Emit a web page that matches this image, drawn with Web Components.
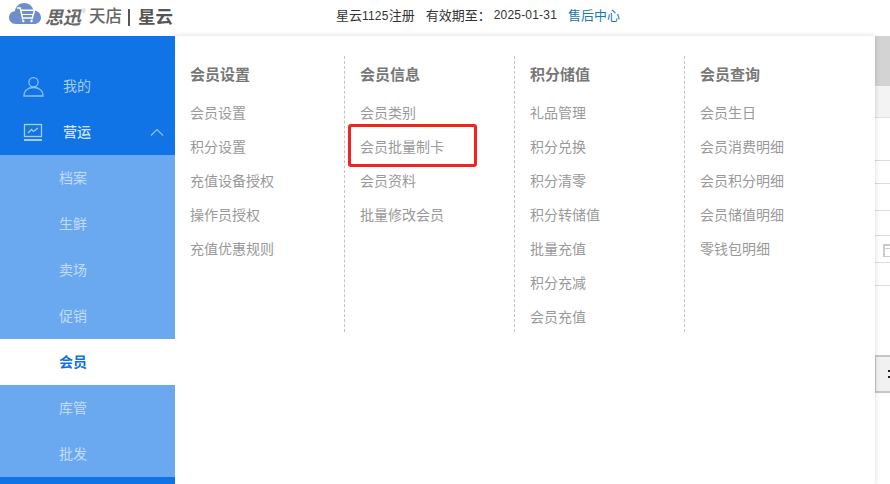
<!DOCTYPE html>
<html lang="zh"><head><meta charset="utf-8"><style>
html,body{margin:0;padding:0;background:#fff}
body{width:890px;height:484px;overflow:hidden;font-family:"Noto Sans CJK SC","Liberation Sans",sans-serif}
</style></head><body>
<app-shell>
  <top-bar slot="top"></top-bar>
  <side-nav slot="side"></side-nav>
  <mega-menu slot="menu"></mega-menu>
  <back-strip slot="back"></back-strip>
</app-shell>
<script>
const cjk='"Noto Sans CJK SC","Liberation Sans",sans-serif';
function def(name,html,init){
  customElements.define(name,class extends HTMLElement{
    connectedCallback(){ if(this.shadowRoot)return; const r=this.attachShadow({mode:'open'}); r.innerHTML=html; if(init)init(r,this);}
  });
}
def('app-shell',`<style>
:host{display:grid;grid-template-columns:175px 700px 15px;grid-template-rows:36px 448px;width:890px;height:484px;overflow:hidden}
.t{grid-column:1/4}
.s{position:relative;z-index:2}
.m{box-shadow:0 0 5px rgba(0,0,0,.16);position:relative;z-index:1;background:#fff}
</style><div class="t"><slot name="top"></slot></div><div class="s"><slot name="side"></slot></div><div class="m"><slot name="menu"></slot></div><div><slot name="back"></slot></div>`);

def('top-bar',`<style>
:host{display:flex;height:36px;background:#fff;align-items:center;position:relative;font:13px ${cjk};color:#333}
.logo{display:flex;align-items:flex-start;width:336px;padding:3px 0 0 9px;box-sizing:border-box;height:36px;color:#555}
svg{display:block;flex:none}
.sx{font:italic 700 18px/1 ${cjk};margin:4px 0 0 4px;color:#666;letter-spacing:-.2px}
.r{font:6px/1 "Liberation Sans",sans-serif;color:#aaa;margin:5px 3px 0 1px}
.td{font:500 16.5px/1 ${cjk};color:#666;margin-top:4px}
.bar{width:2px;height:17px;background:#555;margin:6px 8px 0 6px}
.xy{font:700 17.5px/1 ${cjk};color:#555;margin-top:4px}
.info{display:flex;align-items:center;white-space:nowrap;height:30px;line-height:30px;margin-top:-6px}
.n{font:12px/30px "Liberation Sans",sans-serif;letter-spacing:.2px}
.c{font-family:"Noto Sans CJK TC",sans-serif;margin:0 3px 0 0}
.a{margin-left:11px}
.b{margin-left:11px;color:#1a76b4}
</style>
<div class="logo">
<svg width="32" height="21" viewBox="0 0 32 21"><path d="M6.500 21C2.800 21 0 18.200 0 14.600S2.600 8.300 5.800 8.200C7 3 10.500 0 15.200 0c4.800 0 8.300 3 9.400 7.500C28.800 7.600 32 10.600 32 14.400S29 21 25.200 21z" fill="#6c8fcb"/><path d="M8 5h3.200l2.300 10h9.800l2.200-7.800H11.800" fill="none" stroke="#fff" stroke-width="1.500"/><path d="M12.500 11.500h12M13.500 15v1.600M23 15v1.600" stroke="#fff" stroke-width="1.200" fill="none"/><circle cx="14.300" cy="18" r="1.200" fill="#fff"/><circle cx="22.500" cy="18" r="1.200" fill="#fff"/></svg>
<span class="sx">思迅</span><span class="r">®</span><span class="td">天店</span><span class="bar"></span><span class="xy">星云</span>
</div>
<div class="info"><span>星云<span class="n">1125</span>注册</span><span class="a">有效期至<span class="c">：</span></span><span class="n">2025-01-31</span><span class="b">售后中心</span></div>`);

def('nav-item',`<style>
:host{display:flex;align-items:center;height:46px;box-sizing:border-box;padding-bottom:2px;font:14px ${cjk};color:rgba(255,255,255,.6);padding-left:59px;background:#6aa9f0}
:host([active]){background:#fff;color:#1170e4;font-weight:700}
</style><slot></slot>`);

def('side-nav',`<style>
:host{display:flex;flex-direction:column;height:448px;background:#1074e7;padding-top:27px;box-sizing:border-box}
.top{display:flex;align-items:center;height:46px;font:14px ${cjk};color:#a6cdf7;position:relative}
.top svg{display:block;margin-left:23px;margin-right:19px;flex:none}
.top span{padding-bottom:3px}
.top.on{color:#cfe3fb;font-weight:500}
.chev{margin:0 11px 0 auto!important}
</style>
<div class="top"><svg width="21" height="21" viewBox="0 0 21 21" fill="none" stroke="#8fc0f6" stroke-width="1.300"><circle cx="10.500" cy="6.200" r="4.600"/><path d="M1 20c0-5.500 4-8.500 9.500-8.500S20 14.500 20 20z"/></svg><span>我的</span></div>
<div class="top on"><svg width="21" height="21" viewBox="0 0 21 21" fill="none" stroke="#a6cdf7" stroke-width="1.300"><rect x="1.500" y="2.500" width="17" height="12"/><path d="M5 11l3.500-3.500 2 2L15 6"/><path d="M1 18h18" stroke-width="2"/></svg><span>营运</span><svg class="chev" width="14" height="8" viewBox="0 0 14 8" fill="none" stroke="#8fc0f6" stroke-width="1.200"><path d="M1 7.500L7 1.500l6 6"/></svg></div>
<nav-item>档案</nav-item><nav-item>生鲜</nav-item><nav-item>卖场</nav-item><nav-item>促销</nav-item><nav-item active>会员</nav-item><nav-item>库管</nav-item><nav-item>批发</nav-item>`);

def('menu-col',`<style>
:host{display:block;width:170px;height:276px;box-sizing:border-box;padding-left:15px;border-right:1px dashed #c4c4c4;font:14px ${cjk};color:#999}
:host([last]){border-right:0}
h3{margin:0 0 4px;font:700 15px/35px ${cjk};color:#777}
div{height:34px;line-height:34px;white-space:nowrap}
</style><h3></h3><div id="l"></div>`,(r,h)=>{
  r.querySelector('h3').textContent=h.getAttribute('title');
  const l=r.getElementById('l');
  h.getAttribute('items').split(',').forEach(t=>{const d=document.createElement('div');d.textContent=t;l.appendChild(d)});
  l.replaceWith(...l.children);
});

def('mega-menu',`<style>
:host{display:flex;height:448px;box-sizing:border-box;padding-top:20px;background:#fff;position:relative}
.mark{position:absolute;left:173px;top:88px;width:129px;height:43px;border:3px solid #f5231a;border-radius:3px;box-sizing:border-box}
</style>
<menu-col title="会员设置" items="会员设置,积分设置,充值设备授权,操作员授权,充值优惠规则"></menu-col>
<menu-col title="会员信息" items="会员类别,会员批量制卡,会员资料,批量修改会员"></menu-col>
<menu-col title="积分储值" items="礼品管理,积分兑换,积分清零,积分转储值,批量充值,积分充减,会员充值"></menu-col>
<menu-col last title="会员查询" items="会员生日,会员消费明细,会员积分明细,会员储值明细,零钱包明细"></menu-col>
<div class="mark"></div>`);

def('back-strip',`<style>
:host{display:flex;flex-direction:column;height:448px;background:#fff;overflow:hidden}
.a{height:50px;background:#d3d3d3}
.b{height:31px;background:#f3f3f3;border-bottom:1px solid #e2e2e2}
.r{box-sizing:border-box;border-bottom:1px solid #dcdcdc;position:relative}
.cal{position:absolute;left:8px;top:8px;width:12px;height:10px;border:solid #ccc;border-width:2px 0 1px 2px;box-shadow:inset 0 2px 0 #fff,inset 0 3px 0 #ccc}
.btn{height:38px;box-sizing:border-box;background:#f1f1f2;border:solid #c6c6c6;border-width:2px 0 2px 1px;position:relative}
.dots{position:absolute;left:12px;top:13px;width:2px;height:4px;border:solid #222;border-width:2px 0}
</style>
<div class="a"></div><div class="b"></div>
<div class="r" style="height:43px"></div><div class="r" style="height:23px"></div><div class="r" style="height:27px"></div><div class="r" style="height:25px"></div>
<div class="r" style="height:27px"><span class="cal"></span></div><div class="r" style="height:23px"></div>
<div style="height:69px"></div>
<div class="btn"><span class="dots"></span></div>`);
</script>
</body></html>
